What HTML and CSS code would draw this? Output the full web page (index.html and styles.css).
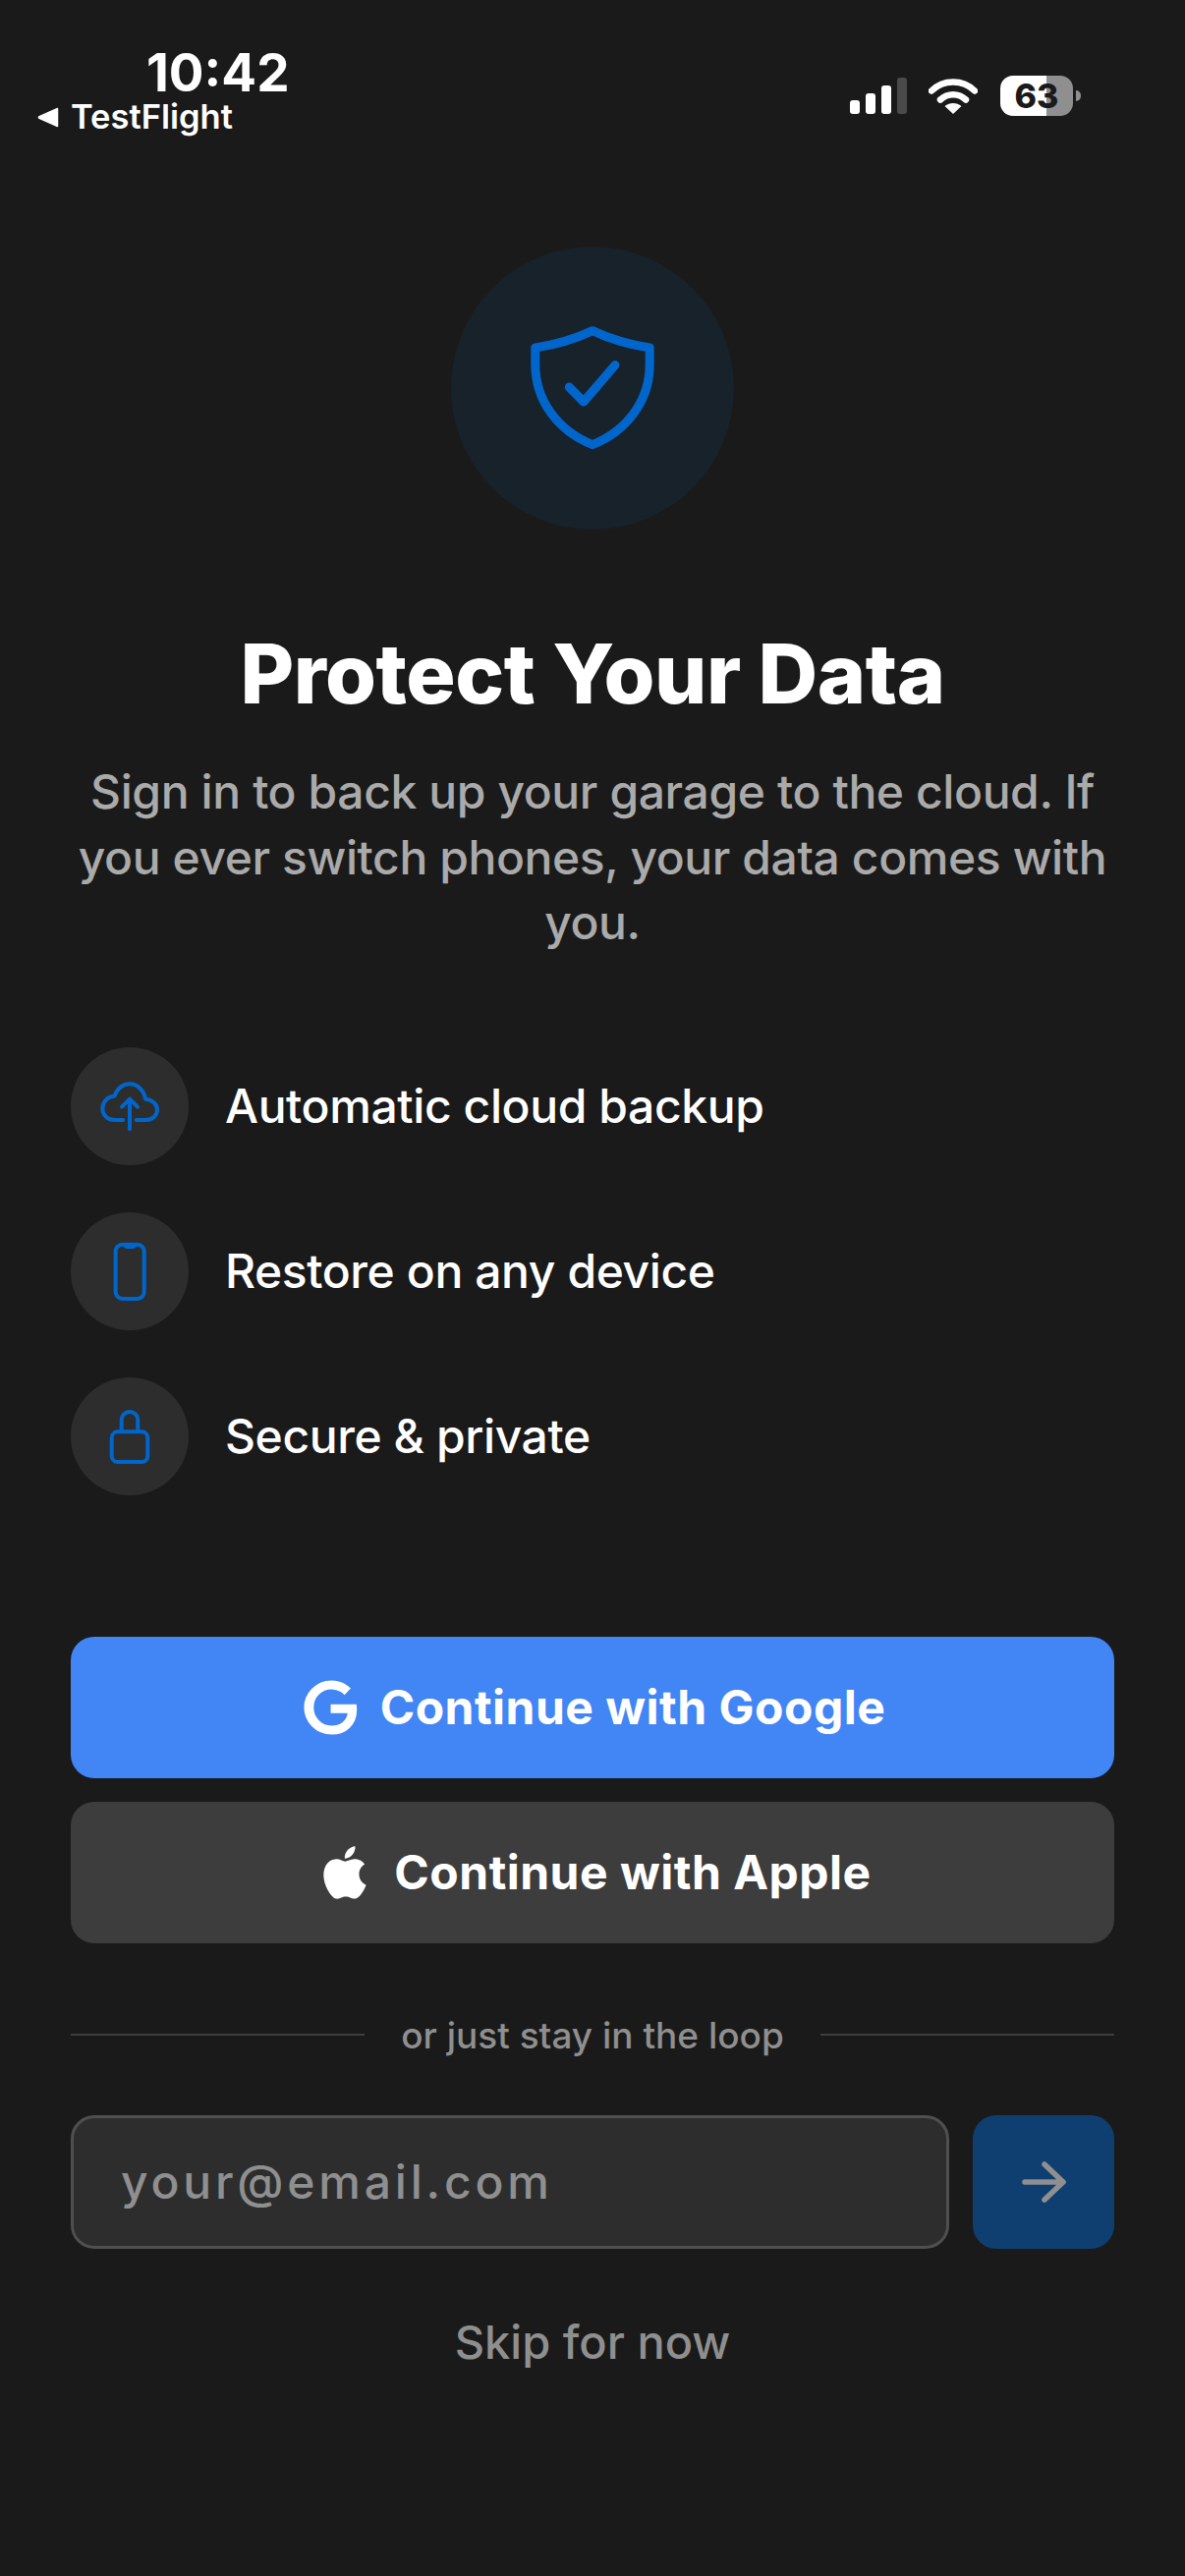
FILE: index.html
```html
<!DOCTYPE html>
<html lang="en">
<head>
    <meta charset="UTF-8">
    <meta name="viewport" content="width=device-width, initial-scale=1.0">
    <title>Protect Your Data</title>
    <link rel="stylesheet" href="styles.css">
</head>
<body>
    <header class="status-bar">
        <div class="status-left">
            <div class="status-time">10:42</div>
            <div class="status-back">
                <svg class="back-arrow" width="22" height="21" viewBox="0 0 22 21"><path d="M20.5 1.5V19.5L2 11.3C1.2 10.9 1.2 10.1 2 9.7Z" fill="#fff" stroke="#fff" stroke-width="1.5" stroke-linejoin="round"/></svg>
                <span>TestFlight</span>
            </div>
        </div>
        <div class="status-right">
            <svg class="signal" width="58" height="37" viewBox="0 0 58 37">
                <rect x="0" y="23" width="10" height="14" rx="3" fill="#fff"/>
                <rect x="16" y="16" width="10" height="21" rx="3" fill="#fff"/>
                <rect x="32" y="8" width="10" height="29" rx="3" fill="#fff"/>
                <rect x="48" y="0" width="10" height="37" rx="3" fill="#4a4a4a"/>
            </svg>
            <svg class="wifi" width="50" height="37" viewBox="0 0 50 37">
                <path d="M3 13.5C15 1.5 35 1.5 47 13.5" fill="none" stroke="#fff" stroke-width="6.5" stroke-linecap="round"/>
                <path d="M12 22.5C19.5 15.5 30.5 15.5 38 22.5" fill="none" stroke="#fff" stroke-width="6.5" stroke-linecap="round"/>
                <path d="M25 37L16.5 29C21.5 25 28.5 25 33.5 29Z" fill="#fff"/>
            </svg>
            <div class="battery"><span>63</span></div>
            <div class="battery-cap"></div>
        </div>
    </header>

    <main class="content">
        <div class="hero-icon">
            <svg width="144" height="144" viewBox="0 0 24 24" fill="none" stroke="#0066cc" stroke-width="1.5" stroke-linecap="round" stroke-linejoin="round">
                <path d="M12 2.28C15 3.7 18 4.6 21.7 5.17V8C21.7 14 18 19.2 12 21.6C6 19.2 2.3 14 2.3 8V5.17C6 4.6 9 3.7 12 2.28Z"/>
                <path d="M8.05 11.83L10.5 14.33L15.83 8.1"/>
            </svg>
        </div>

        <h1 class="title">Protect Your Data</h1>
        <p class="subtitle">Sign in to back up your garage to the cloud. If you ever switch phones, your data comes with you.</p>

        <ul class="features">
            <li class="feature">
                <div class="feature-icon">
                    <svg width="72" height="72" viewBox="0 0 72 72" fill="none" stroke="#0066cc" stroke-width="4" stroke-linecap="round" stroke-linejoin="round">
                        <path d="M29.3 50H20C13.5 50 8.3 45 8.3 38.5C8.3 31.5 13.5 26 20.7 25.5C23 18 29 13.3 36 13.3C44 13.3 50.5 20 52 28.5C59 29.5 64 34 64 39.5C64 45.5 59 50 52.3 50H42.7"/>
                        <path d="M36 59.3V28.7M28 36.7L36 28.7L44 36.7"/>
                    </svg>
                </div>
                <span>Automatic cloud backup</span>
            </li>
            <li class="feature">
                <div class="feature-icon">
                    <svg width="72" height="72" viewBox="0 0 72 72" fill="none" stroke="#0066cc" stroke-width="4" stroke-linecap="round" stroke-linejoin="round">
                        <rect x="21.7" y="8.7" width="29" height="55.3" rx="7"/>
                        <path d="M29.5 9H43C43 11 41.5 12.5 39.5 12.5H33C31 12.5 29.5 11 29.5 9Z" fill="#0066cc" stroke-width="1"/>
                    </svg>
                </div>
                <span>Restore on any device</span>
            </li>
            <li class="feature">
                <div class="feature-icon">
                    <svg width="72" height="72" viewBox="0 0 72 72" fill="none" stroke="#0066cc" stroke-width="4" stroke-linecap="round" stroke-linejoin="round">
                        <rect x="17.7" y="31.3" width="36.6" height="30.7" rx="6"/>
                        <path d="M27.7 31V19.3A8.3 8.3 0 0 1 44.3 19.3V31"/>
                    </svg>
                </div>
                <span>Secure &amp; private</span>
            </li>
        </ul>

        <button class="auth-btn google">
            <svg width="64" height="64" viewBox="0 0 24 24" fill="#fff" stroke="#fff" stroke-width="0.7"><path d="M21.35 11.1h-9.17v2.73h6.51c-.33 3.81-3.5 5.44-6.5 5.44C8.36 19.27 5 16.25 5 12c0-4.1 3.2-7.27 7.2-7.27 3.09 0 4.9 1.97 4.9 1.97L19 4.72S16.56 2 12.1 2C6.42 2 2 6.8 2 12c0 5.05 4.13 10 10.22 10 5.35 0 9.25-3.67 9.25-9.09 0-1.15-.12-1.81-.12-1.81z"/></svg>
            <span>Continue with Google</span>
        </button>
        <button class="auth-btn apple">
            <svg width="64" height="64" viewBox="0 0 24 24" fill="#fff"><path d="M18.71 19.5c-.83 1.24-1.71 2.45-3.05 2.47-1.34.03-1.77-.79-3.29-.79-1.53 0-2 .77-3.27.82-1.31.05-2.3-1.32-3.14-2.53C4.25 17 2.94 12.45 4.7 9.39c.87-1.52 2.43-2.48 4.12-2.51 1.28-.02 2.5.87 3.29.87.78 0 2.26-1.07 3.81-.91.65.03 2.47.26 3.64 1.98-.09.06-2.17 1.28-2.15 3.81.03 3.02 2.65 4.03 2.68 4.04-.03.07-.42 1.44-1.38 2.83M13 3.5c.73-.83 1.94-1.46 2.94-1.5.13 1.17-.34 2.35-1.04 3.19-.69.85-1.83 1.51-2.95 1.42-.15-1.15.41-2.35 1.05-3.11z"/></svg>
            <span>Continue with Apple</span>
        </button>

        <div class="divider">
            <span class="divider-line"></span>
            <span class="divider-text">or just stay in the loop</span>
            <span class="divider-line"></span>
        </div>

        <form class="email-form">
            <input class="email-input" type="text" placeholder="your@email.com">
            <button type="button" class="email-submit">
                <svg width="48" height="48" viewBox="0 0 48 48" fill="none" stroke="#8f8f8f" stroke-width="5.5" stroke-linecap="round" stroke-linejoin="round"><path d="M5 24H44M25 6L44 24L25 42"/></svg>
            </button>
        </form>

        <button class="skip">Skip for now</button>
    </main>
</body>
</html>
```

FILE: styles.css
```css
/* Page */
* {
    box-sizing: border-box;
}

body {
    margin: 0;
    width: 1206px;
    height: 2622px;
    overflow: hidden;
    background-color: #1a1a1a;
    color: #ffffff;
    font-family: Inter, "Liberation Sans", sans-serif;
}

/* Status bar */
.status-bar {
    display: flex;
    justify-content: space-between;
    align-items: flex-start;
    height: 251px;
    padding: 50px 106px 0 38px;
}

.status-time {
    margin-left: 111px;
    font-size: 53px;
    line-height: 48px;
    font-weight: 700;
}

.status-back {
    display: flex;
    align-items: center;
    gap: 12px;
    font-size: 34.5px;
    line-height: 42px;
    font-weight: 600;
}

.status-right {
    display: flex;
    align-items: center;
    margin-top: 27px;
}

.wifi {
    margin-left: 22px;
}

.battery {
    display: flex;
    align-items: center;
    justify-content: center;
    width: 74px;
    height: 41px;
    margin-left: 23px;
    border-radius: 13px;
    background: linear-gradient(90deg, #ffffff 63.5%, #8f8f8f 63.5%);
    color: #1a1a1a;
    font-size: 34px;
    font-weight: 800;
}

.battery-cap {
    width: 5px;
    height: 11px;
    margin-left: 3px;
    border-radius: 0 6px 6px 0;
    background-color: #8f8f8f;
}

/* Main column */
.content {
    display: flex;
    flex-direction: column;
    align-items: center;
    padding: 0 72px;
}

.hero-icon {
    display: flex;
    align-items: center;
    justify-content: center;
    width: 288px;
    height: 288px;
    border-radius: 50%;
    background-color: #18222b;
}

.title {
    margin: 96px 0 0;
    font-size: 84px;
    line-height: 102px;
    font-weight: 800;
    letter-spacing: -0.5px;
}

.subtitle {
    margin: 36px 0 0;
    color: #aaaaaa;
    font-size: 48px;
    font-weight: 450;
    line-height: 66.5px;
    letter-spacing: -0.4px;
    text-align: center;
}

/* Feature list */
.features {
    display: flex;
    flex-direction: column;
    gap: 48px;
    width: 100%;
    margin: 93px 0 0;
    padding: 0;
    list-style-type: none;
}

.feature {
    display: flex;
    align-items: center;
    gap: 37px;
    font-size: 48px;
    font-weight: 500;
    letter-spacing: -0.4px;
}

.feature-icon {
    display: flex;
    align-items: center;
    justify-content: center;
    width: 120px;
    height: 120px;
    border-radius: 50%;
    background-color: #2d2d2d;
}

/* Sign in buttons */
.auth-btn {
    display: flex;
    align-items: center;
    justify-content: center;
    gap: 18px;
    width: 100%;
    height: 144px;
    border: none;
    border-radius: 24px;
    color: #ffffff;
    font-family: inherit;
    font-size: 48px;
    font-weight: 700;
    letter-spacing: 0.5px;
}

.google {
    margin-top: 144px;
    background-color: #4285f4;
}

.apple {
    margin-top: 24px;
    background-color: #3d3d3d;
}

/* Divider */
.divider {
    display: flex;
    align-items: center;
    gap: 37px;
    width: 100%;
    margin-top: 70px;
}

.divider-line {
    flex: 1;
    height: 2px;
    background-color: #3d3d3d;
}

.divider-text {
    padding-top: 2px;
    color: #8f8f8f;
    font-size: 37px;
    font-weight: 450;
    line-height: 44px;
}

/* Email form */
.email-form {
    display: flex;
    gap: 24px;
    width: 100%;
    margin-top: 59px;
}

.email-input {
    flex: 1;
    min-width: 0;
    height: 136px;
    padding: 0 48px;
    border: 3px solid #4f4f4f;
    border-radius: 24px;
    background-color: #2d2d2d;
    color: #ffffff;
    font-family: inherit;
    font-size: 48px;
    font-weight: 450;
    letter-spacing: 3.8px;
}

.email-input::placeholder {
    color: #8f8f8f;
    opacity: 1;
}

.email-submit {
    display: flex;
    align-items: center;
    justify-content: center;
    width: 144px;
    height: 136px;
    padding: 0;
    border: none;
    border-radius: 24px;
    background-color: #0f3f70;
}

.skip {
    margin-top: 67px;
    padding: 0;
    border: none;
    background: none;
    color: #8f8f8f;
    font-family: inherit;
    font-size: 47px;
    font-weight: 450;
    line-height: 56px;
}
```
